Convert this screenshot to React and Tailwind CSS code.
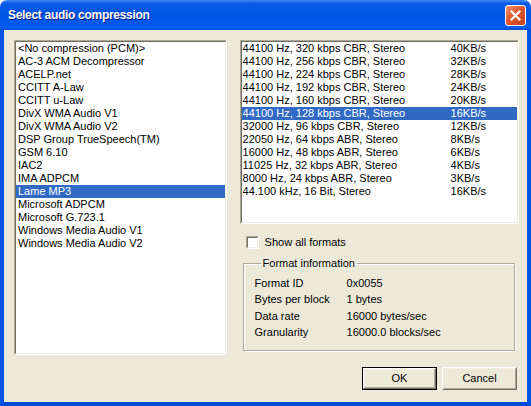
import React, { useState } from "react";

const codecs = [
  "<No compression (PCM)>",
  "AC-3 ACM Decompressor",
  "ACELP.net",
  "CCITT A-Law",
  "CCITT u-Law",
  "DivX WMA Audio V1",
  "DivX WMA Audio V2",
  "DSP Group TrueSpeech(TM)",
  "GSM 6.10",
  "IAC2",
  "IMA ADPCM",
  "Lame MP3",
  "Microsoft ADPCM",
  "Microsoft G.723.1",
  "Windows Media Audio V1",
  "Windows Media Audio V2",
];

const formats = [
  ["44100 Hz, 320 kbps CBR, Stereo", "40KB/s"],
  ["44100 Hz, 256 kbps CBR, Stereo", "32KB/s"],
  ["44100 Hz, 224 kbps CBR, Stereo", "28KB/s"],
  ["44100 Hz, 192 kbps CBR, Stereo", "24KB/s"],
  ["44100 Hz, 160 kbps CBR, Stereo", "20KB/s"],
  ["44100 Hz, 128 kbps CBR, Stereo", "16KB/s"],
  ["32000 Hz, 96 kbps CBR, Stereo", "12KB/s"],
  ["22050 Hz, 64 kbps ABR, Stereo", "8KB/s"],
  ["16000 Hz, 48 kbps ABR, Stereo", "6KB/s"],
  ["11025 Hz, 32 kbps ABR, Stereo", "4KB/s"],
  ["8000 Hz, 24 kbps ABR, Stereo", "3KB/s"],
  ["44.100 kHz, 16 Bit, Stereo", "16KB/s"],
];

const info = [
  ["Format ID", "0x0055"],
  ["Bytes per block", "1 bytes"],
  ["Data rate", "16000 bytes/sec"],
  ["Granularity", "16000.0 blocks/sec"],
];

function Sunken({ className, children }) {
  return (
    <div className={"border border-t-[#ACA899] border-l-[#ACA899] border-r-white border-b-white " + className}>
      <div className="h-full w-full border border-t-[#716F64] border-l-[#716F64] border-r-[#F1EFE2] border-b-[#F1EFE2] bg-white overflow-hidden">
        {children}
      </div>
    </div>
  );
}

function Button({ label, isDefault }) {
  return (
    <div className={"w-[75px] h-[23px] " + (isDefault ? "border border-black" : "")}>
      <div className="h-full border border-t-white border-l-white border-r-[#716F64] border-b-[#716F64]">
        <div className="h-full flex items-center justify-center border border-t-[#F1EFE2] border-l-[#F1EFE2] border-r-[#ACA899] border-b-[#ACA899] bg-[#ECE9D8]">
          {label}
        </div>
      </div>
    </div>
  );
}

export default function App() {
  const [codec, setCodec] = useState(11);
  const [format, setFormat] = useState(5);
  const [showAll, setShowAll] = useState(false);

  return (
    <div className="w-[531px] h-[406px] bg-white font-['Liberation_Sans',Arial,sans-serif] text-[11px] text-black select-none">
      <div className="h-full flex flex-col rounded-t-[7px] overflow-hidden">
        <div className="h-[30px] flex items-center pl-[8px] pr-[5px] bg-[linear-gradient(to_bottom,#3C8CF6_0%,#0A5BE8_12%,#0054E3_45%,#0058EC_80%,#0A5FEE_92%,#0449D0_100%)]">
          <div className="flex-1 text-white font-bold text-[12px] tracking-[-0.3px] [text-shadow:1px_1px_0_#0a1883]">
            Select audio compression
          </div>
          <div className="w-[21px] h-[21px] rounded-[3px] border border-white bg-[linear-gradient(135deg,#F0946F_0%,#E1582F_45%,#C8401C_100%)] flex items-center justify-center">
            <svg width="11" height="11" viewBox="0 0 11 11">
              <path d="M1.5 1.5 L9.5 9.5 M9.5 1.5 L1.5 9.5" stroke="white" strokeWidth="2.2" strokeLinecap="square" />
            </svg>
          </div>
        </div>

        <div className="flex-1 border-x-4 border-b-4 border-x-[#0054E3] border-b-[#0048D8] bg-[#ECE9D8] flex pt-[10px] pl-[10px] pr-[8px]">
          <Sunken className="w-[213px] h-[315px]">
            {codecs.map((c, i) => (
              <div
                key={c}
                onClick={() => setCodec(i)}
                className={"h-[13px] leading-[13px] pl-[2px] whitespace-nowrap " + (i === codec ? "bg-[#316AC5] text-white" : "")}
              >
                {c}
              </div>
            ))}
          </Sunken>

          <div className="ml-[13px] w-[280px] flex flex-col">
            <Sunken className="h-[184px]">
              {formats.map(([f, r], i) => (
                <div
                  key={f}
                  onClick={() => setFormat(i)}
                  className={"h-[13px] leading-[13px] pl-[1px] flex whitespace-nowrap " + (i === format ? "bg-[#316AC5] text-white" : "")}
                >
                  <span className="w-[208px]">{f}</span>
                  <span>{r}</span>
                </div>
              ))}
            </Sunken>

            <div className="mt-[12px] ml-[6px] flex items-center h-[13px]" onClick={() => setShowAll(!showAll)}>
              <Sunken className="w-[13px] h-[13px]">
                {showAll && (
                  <svg width="9" height="9" viewBox="0 0 9 9">
                    <path d="M1.5 4 L3.5 6 L7.5 2" stroke="black" strokeWidth="1.5" fill="none" />
                  </svg>
                )}
              </Sunken>
              <span className="ml-[6px]">Show all formats</span>
            </div>

            <fieldset className="mt-[8px] ml-[3px] w-[272px] border border-[#ACA899] shadow-[inset_1px_1px_0_#fff,1px_1px_0_#fff] pl-[11px] pt-[5px] pb-[10px]">
              <legend className="ml-[6px] px-[2px] leading-[13px]">Format information</legend>
              {info.map(([k, v]) => (
                <div key={k} className="flex h-[16.3px] leading-[16px]">
                  <span className="w-[92px]">{k}</span>
                  <span>{v}</span>
                </div>
              ))}
            </fieldset>

            <div className="mt-[16px] flex justify-end gap-[5px] pr-[2px]">
              <Button label="OK" isDefault />
              <Button label="Cancel" />
            </div>
          </div>
        </div>
      </div>
    </div>
  );
}
